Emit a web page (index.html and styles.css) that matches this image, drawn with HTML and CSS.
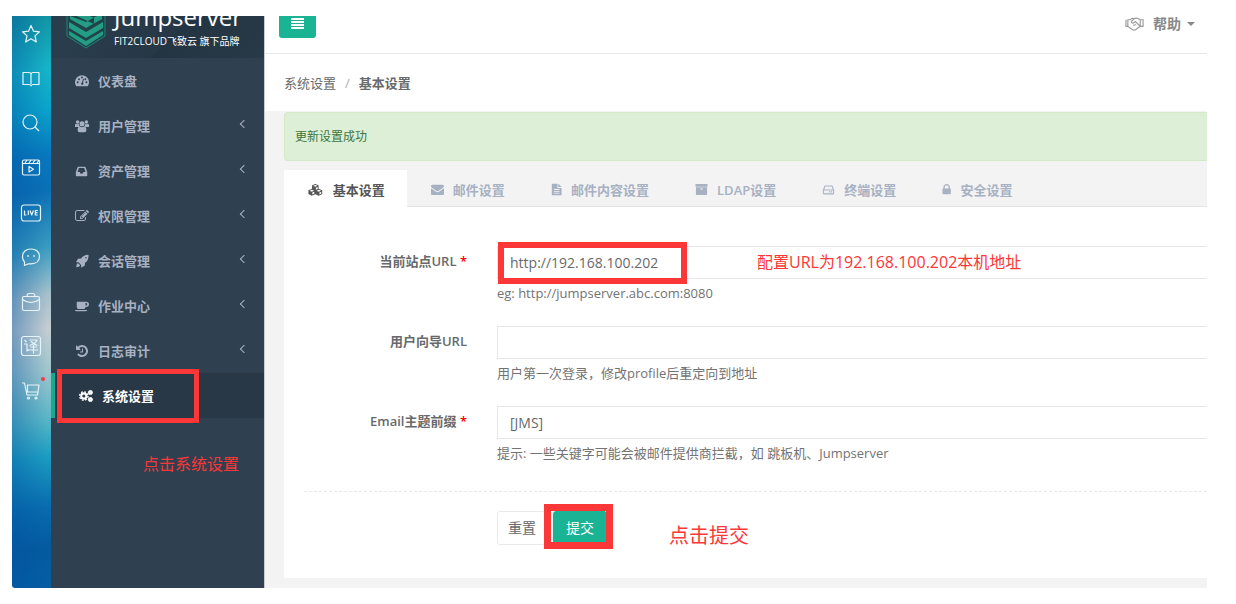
FILE: index.html
```html
<!DOCTYPE html>
<html lang="zh-CN">
<head>
<meta charset="utf-8">
<title>系统设置 - Jumpserver</title>
<link rel="stylesheet" href="styles.css">
</head>
<body>
<div class="app">
  <nav class="rail" aria-label="快捷栏">
    <a href="#" aria-label="收藏"><svg viewBox="0 0 22 22"><path d="M11 2.500l2.500 5.700 6 .6-4.500 4.100 1.300 6.100-5.300-3.200-5.300 3.200 1.300-6.100-4.500-4.100 6-.6z"/></svg></a>
    <a href="#" aria-label="阅读"><svg viewBox="0 0 22 22"><path d="M11 6v10M11 6q-.5-1.500-2-1.500H3v12h6q1.500 0 2 1.300.5-1.300 2-1.300h6v-12h-6q-1.500 0-2 1.500z"/></svg></a>
    <a href="#" aria-label="搜索"><svg viewBox="0 0 22 22"><circle cx="10" cy="10" r="7"/><path d="M15 15l4 4"/></svg></a>
    <a href="#" aria-label="视频"><svg viewBox="0 0 22 22"><rect x="2.500" y="3" width="17" height="15" rx="1.500"/><path d="M2.500 6.500h17M5 6l2-3M9 6l2-3M13 6l2-3M17 6l2-3M9 9.500v5.500l4.500-2.700z"/></svg></a>
    <a href="#" aria-label="直播"><svg viewBox="0 0 22 22"><rect x="1.500" y="3" width="19" height="16" rx="2.500"/><path d="M4.500 8.500v4.500h2M8.300 8.500v4.500M10 8.500l1.700 4.500 1.700-4.500M17.800 8.500h-2.500v4.500h2.500M15.300 10.700h2.200"/></svg></a>
    <a href="#" aria-label="消息"><svg viewBox="0 0 22 22"><path d="M4.500 19.500V16Q2.500 14 2.500 10.500C2.500 6 6 3 11 3s8.500 3 8.500 7.500S16 17.800 11 17.800H8.500z"/><path d="M8 9v2M14 9v2"/></svg></a>
    <a href="#" aria-label="工具"><svg viewBox="0 0 22 22"><rect x="2.500" y="5.500" width="17" height="14" rx="1.500"/><path d="M7 5.500q0-3 2-3h4q2 0 2 3M2.500 8.500q8.500 6 17 0M9.500 11.500h3"/></svg></a>
    <a href="#" aria-label="翻译"><svg viewBox="0 0 22 22"><rect x="1.500" y="1.500" width="19" height="19" rx="2.500"/><path d="M4.500 5l2 2M4 9h3v7l2-1.500M9.500 5h7.500q-2 4-7.500 5.500M11 6.500q3 3 6.500 4M10 12h7M9 15h9M13.500 10v8.500"/></svg></a>
    <a href="#" aria-label="购物车"><svg viewBox="0 0 22 22"><path d="M2 3h2.500l2.500 12h10.500l1.500-10H7.500v7h10"/><circle cx="8.500" cy="18" r="1"/><circle cx="16" cy="18" r="1"/></svg><i class="dot"></i></a>
  </nav>

  <aside class="sidebar">
    <div class="brand">
      <svg class="brand-logo" viewBox="0 0 40 44"><path class="shield" d="M1 1v30l19 12 19-12V1z"/><path class="shape" d="M4 4l8-3v4l16 8v6L4 8zM4 14l16 9 16-9v-6l-16 9L4 11zM3 17l17 10 17-10v6L20 33 3 23zM3 26l17 10 17-10v4L20 41 3 30z"/></svg>
      <div class="brand-text"><span class="brand-name">Jumpserver</span><span class="brand-sub">FIT2CLOUD飞致云 旗下品牌</span></div>
    </div>
    <ul class="menu">
      <li><a href="#"><svg viewBox="0 0 16 16"><path fill-rule="evenodd" d="M1.500 14A8 8 0 1 1 14.500 14zM8 12.500a1.700 1.700 0 0 0 1.200-2.800l1-4-1-.3-1 4A1.700 1.700 0 0 0 8 12.500zM2 9.500a1.100 1.100 0 1 0 2.200 0 1.100 1.100 0 0 0-2.200 0zM3.500 6a1.100 1.100 0 1 0 2.200 0 1.100 1.100 0 0 0-2.200 0zM6.900 4a1.100 1.100 0 1 0 2.200 0 1.100 1.100 0 0 0-2.200 0zM10.700 6a1.100 1.100 0 1 0 2.200 0 1.100 1.100 0 0 0-2.200 0zM12 9.500a1.100 1.100 0 1 0 2.200 0 1.100 1.100 0 0 0-2.200 0z"/></svg>仪表盘</a></li>
      <li><a href="#"><svg viewBox="0 0 16 16"><circle cx="3" cy="3.300" r="2"/><circle cx="13" cy="3.300" r="2"/><circle cx="8" cy="5.500" r="2.900"/><path d="M0 9V7q.2-1.800 1.500-1.500 1.500 1 3 .3 0 2 1 3.200zM16 9V7q-.2-1.800-1.500-1.500-1.500 1-3 .3 0 2-1 3.200zM3 13q0-4.300 2.500-4.300 2.500 1.500 5 0Q13 8.700 13 13q0 2-2 2H5q-2 0-2-2z"/></svg>用户管理<span class="arrow"></span></a></li>
      <li><a href="#"><svg viewBox="0 0 16 16"><path fill-rule="evenodd" d="M1 9l2-5.500Q3.200 3 4 3h7q.8 0 1 .5L14 9v4.500q0 .5-.5.500h-12q-.5 0-.5-.5zM3 9h2.500l1 2h2l1-2H12l-1.500-4.500h-6z"/></svg>资产管理<span class="arrow"></span></a></li>
      <li><a href="#"><svg viewBox="0 0 1792 1792"><path d="M888 1184l116-116-152-152-116 116v56h96v96h56zm440-720q-16-16-33 1l-350 350q-17 17-1 33t33-1l350-350q17-17 1-33zm80 594v190q0 119-84.500 203.500t-203.500 84.500h-832q-119 0-203.500-84.500t-84.500-203.500v-832q0-119 84.500-203.500t203.500-84.500h832q63 0 117 25 15 7 18 23 3 17-9 29l-49 49q-14 14-32 8-23-6-45-6h-832q-66 0-113 47t-47 113v832q0 66 47 113t113 47h832q66 0 113-47t47-113v-126q0-13 9-22l64-64q15-15 35-7t20 29zm-96-738l288 288-672 672h-288v-288zm444 132l-92 92-288-288 92-92q28-28 68-28t68 28l152 152q28 28 28 68t-28 68z"/></svg>权限管理<span class="arrow"></span></a></li>
      <li><a href="#"><svg viewBox="0 0 16 16"><path fill-rule="evenodd" d="M15.500 1Q10 .8 7 5L3.500 5.300 1 9.300l3 .2 3 3 .2 3.200 4-2.500L11.500 10Q15.700 7 15.500 1zM12.500 3.500a.8.8 0 1 1 0 1.600.8.8 0 0 1 0-1.600zM3.700 10.700Q1.500 11 1.500 15q4 0 4.300-2.200z"/></svg>会话管理<span class="arrow"></span></a></li>
      <li><a href="#"><svg viewBox="0 0 16 16"><path fill-rule="evenodd" d="M2 3h10.500q3.500 0 3.500 3t-3.500 3H12q0 2.500-2.500 2.500h-5Q2 11.500 2 9zM12 4.500v3h.5q1.500 0 1.500-1.500t-1.500-1.500zM0 12.500h14q0 1.500-2 1.500H2q-2 0-2-1.500z"/></svg>作业中心<span class="arrow"></span></a></li>
      <li><a href="#"><svg viewBox="0 0 1792 1792"><path d="M1664 896q0 156-61 298t-164 245-245 164-298 61q-172 0-327-72.500t-264-204.500q-7-10-6.500-22.500t8.500-20.500l137-138q10-9 25-9 16 2 23 12 73 95 179 147t225 52q104 0 198.500-40.500t163.500-109.500 109.500-163.500 40.500-198.500-40.500-198.500-109.500-163.500-163.500-109.500-198.500-40.500q-98 0-188 35.500t-160 101.500l137 138q31 30 14 69-17 40-59 40h-448q-26 0-45-19t-19-45v-448q0-42 40-59 39-17 69 14l130 129q107-101 244.500-156.500t284.500-55.500q156 0 298 61t245 164 164 245 61 298zm-640-288v448q0 14-9 23t-23 9h-320q-14 0-23-9t-9-23v-64q0-14 9-23t23-9h224v-352q0-14 9-23t23-9h64q14 0 23 9t9 23z"/></svg>日志审计<span class="arrow"></span></a></li>
      <li class="active"><a href="#"><svg viewBox="0 0 16 16"><g class="gears"><circle cx="5.500" cy="8" r="3"/><circle cx="13" cy="4" r="1.500"/><circle cx="13" cy="12" r="1.500"/></g><g class="teeth"><circle cx="5.500" cy="8" r="4.800"/></g><g class="teeth small"><circle cx="13" cy="4" r="2.500"/><circle cx="13" cy="12" r="2.500"/></g></svg>系统设置</a><span class="mark mark-menu"></span><span class="note note-menu">点击系统设置</span></li>
    </ul>
  </aside>

  <main class="main">
    <header class="topbar">
      <button class="toggle" type="button" aria-label="切换菜单"><span></span><span></span><span></span><span></span></button>
      <a class="help" href="#"><svg viewBox="0 0 20 14"><path d="M1 2.500v7h2l5 3.500q1.500.8 3 0l5-3.500h3v-7h-3L13 1q-2-.6-4 1L6.500 4.500q.5 2 2.500 1.500L11 4.500l4.500 4.500M3 9.500v-7h2L7.500 1 10 1.500M16 2.500v7M8.500 8.500q2 0 3-1.500"/></svg>帮助<span class="caret"></span></a>
    </header>
    <nav class="crumbs" aria-label="面包屑"><a href="#">系统设置</a><span class="slash">/</span><strong>基本设置</strong></nav>
    <div class="content">
      <div class="alert" role="status">更新设置成功</div>
      <div class="tabs">
        <a class="tab current" href="#"><svg viewBox="0 0 18 16"><path fill-rule="evenodd" d="M9 0l4 1.600v4.200l4.500 2v4.500L13.300 14.500 9 12.500l-4.300 2L.5 12.300V7.800L5 5.800V1.600zM9 1.200L6.300 2.300 9 3.400l2.700-1.100zM9.700 7.100l2.200-1V3.700l-2.200 1zM4.700 7L2 8.200l2.700 1.200 2.700-1.200zM13.300 7l-2.700 1.200 2.700 1.200L16 8.200zM5.300 13l2.500-1.200V9.500l-2.500 1zM14 13l2.300-1.200V9.500l-2.300 1z"/></svg>基本设置</a>
        <a class="tab" href="#"><svg viewBox="0 0 1792 1792"><path d="M1792 710v794q0 66-47 113t-113 47h-1472q-66 0-113-47t-47-113v-794q44 49 101 87 362 246 497 345 57 42 92.500 65.500t94.500 48 110 24.500h2q51 0 110-24.500t94.500-48 92.500-65.500q170-123 498-345 57-39 100-87zm0-294q0 79-49 151t-122 123q-376 261-468 325-10 7-42.500 31t-54 38.500-52 32.500-57.500 27-50 9h-2q-23 0-50-9t-57.500-27-52-32.500-54-38.500-42.500-31q-91-64-262-182.500t-205-142.500q-62-42-117-115.500t-55-136.500q0-78 41.500-130t118.500-52h1472q65 0 112.500 47t47.500 113z"/></svg>邮件设置</a>
        <a class="tab" href="#"><svg viewBox="0 0 14 16"><path fill-rule="evenodd" d="M1 1h7v5h5v9H1zM9 1l4 4H9zM3.500 7.500v1h7v-1zM3.500 9.700v1h7v-1zM3.500 12v1h7v-1z"/></svg>邮件内容设置</a>
        <a class="tab" href="#"><svg viewBox="0 0 1792 1792"><path d="M1088 832q0-26-19-45t-45-19h-256q-26 0-45 19t-19 45 19 45 45 19h256q26 0 45-19t19-45zm576-192v960q0 26-19 45t-45 19h-1408q-26 0-45-19t-19-45v-960q0-26 19-45t45-19h1408q26 0 45 19t19 45zm64-448v256q0 26-19 45t-45 19h-1536q-26 0-45-19t-19-45v-256q0-26 19-45t45-19h1536q26 0 45 19t19 45z"/></svg>LDAP设置</a>
        <a class="tab" href="#"><svg viewBox="0 0 16 16"><path fill-rule="evenodd" d="M1 9l2-5.500Q3.300 3 4.200 3h7.600q.9 0 1.200.5L15 9v3.500q0 1.500-1.500 1.500h-11Q1 14 1 12.500zM2.800 8h10.400L12 4.300H4zM2.300 9.300v3.400h11.400V9.300zM8.500 10.300H10v1.400H8.500zM11 10.300h1.500v1.400H11z"/></svg>终端设置</a>
        <a class="tab" href="#"><svg viewBox="256 0 1280 1792"><path d="M640 768h512v-192q0-106-75-181t-181-75-181 75-75 181v192zm832 96v576q0 40-28 68t-68 28h-960q-40 0-68-28t-28-68v-576q0-40 28-68t68-28h32v-192q0-184 132-316t316-132 316 132 132 316v192h32q40 0 68 28t28 68z"/></svg>安全设置</a>
      </div>
      <form class="panel">
        <div class="row">
          <label for="site">当前站点URL <b>*</b></label>
          <div class="field"><input id="site" type="text" value="http://192.168.100.202"><p>eg: http://jumpserver.abc.com:8080</p><span class="mark mark-site"></span><span class="note note-site">配置URL为192.168.100.202本机地址</span></div>
        </div>
        <div class="row">
          <label for="guide">用户向导URL</label>
          <div class="field"><input id="guide" type="text"><p>用户第一次登录，修改profile后重定向到地址</p></div>
        </div>
        <div class="row">
          <label for="prefix">Email主题前缀 <b>*</b></label>
          <div class="field"><input id="prefix" type="text" value="[JMS]"><p>提示: 一些关键字可能会被邮件提供商拦截，如 跳板机、Jumpserver</p></div>
        </div>
        <hr>
        <div class="actions">
          <button class="btn" type="reset">重置</button>
          <div class="submit"><button class="btn primary" type="submit">提交</button><span class="mark mark-submit"></span><span class="note note-submit">点击提交</span></div>
        </div>
      </form>
    </div>
  </main>
</div>
</body>
</html>
```
FILE: styles.css
```css
* { box-sizing: border-box; }
body {
  margin: 0;
  padding: 16px 29px 16px 12px;
  min-height: 100vh;
  display: flex;
  background: #fff;
  color: #676a6c;
  font: 13px/20px "Open Sans", "Noto Sans CJK SC", sans-serif;
}
a { color: inherit; text-decoration: none; }
button, input { font: inherit; color: inherit; }
.app { flex: 1; display: flex; min-width: 0; }

/* shortcut rail */
.rail {
  width: 39px;
  display: flex;
  flex-direction: column;
  align-items: center;
  justify-content: space-between;
  padding: 6px 2px 185px 0;
  border-bottom-left-radius: 3px;
  background:
    linear-gradient(90deg, rgba(0, 80, 160, .4), rgba(0, 90, 160, 0) 90%),
    linear-gradient(172deg, #12919f 0%, #16b4c8 10%, #0aa3cb 17%, #0877bd 25%, #0b70b6 31%, #3a9cc0 41%, #a5c0cc 49%, #c3cdd2 55%, #a0c6cd 62%, #55b5c6 71%, #1c9dc2 77%, #086bad 86%, #045a9f 93%, #045fa3 100%);
}
.rail a { position: relative; display: block; height: 24px; padding-top: 1px; }
.rail svg { display: block; width: 22px; height: 22px; fill: none; stroke: #e6f3f8; stroke-width: 1.2; stroke-linejoin: round; }
.dot { position: absolute; top: -2px; right: -3px; width: 4px; height: 4px; border-radius: 50%; background: #f5384a; }

/* navigation */
.sidebar { width: 213px; background: #2f4050; color: #a7b1c2; }
.brand {
  height: 42px;
  overflow: hidden;
  display: flex;
  align-items: flex-end;
  gap: 8px;
  padding: 0 15px 9px;
  background: linear-gradient(135deg, #2a3d4d 20%, #263746 55%, #233442 56%, #283947);
}
.brand-logo { width: 40px; height: 44px; flex: none; }
.shield { fill: #20434b; stroke: #1f8573; }
.shape { fill: #239d83; }
.brand-text { display: flex; flex-direction: column; color: #fff; white-space: nowrap; }
.brand-name { font-size: 24px; line-height: 32px; }
.brand-sub { font-size: 10px; line-height: 16px; }
.menu { list-style: none; margin: 0; padding: 0; }
.menu li { position: relative; }
.menu a { display: flex; align-items: center; gap: 9px; height: 45px; padding: 0 17px 0 24px; font-weight: 600; }
.menu svg { width: 14px; height: 14px; fill: currentColor; }
.arrow { width: 6px; height: 6px; margin-left: auto; margin-bottom: 4px; border: solid currentColor; border-width: 0 0 1px 1px; transform: rotate(45deg); }
.menu .active { background: #293846; color: #fff; border-left: 4px solid #19aa8d; }
.gears, .teeth { fill: none; stroke: currentColor; stroke-width: 2.4; }
.teeth { stroke-width: 1.6; stroke-dasharray: 2 1.77; }
.small { stroke-width: 1; stroke-dasharray: 1 .96; }

/* page */
.main { flex: 1; min-width: 0; border-left: 1px solid #c9cdd1; background: #f3f3f4; }
.topbar { height: 38px; display: flex; justify-content: space-between; padding: 0 12px 0 14px; background: #fff; border-bottom: 1px solid #e7eaec; }
.toggle { width: 37px; height: 22px; padding: 2px 0 0 12px; border: 0; border-radius: 0 0 3px 3px; background: #1ab394; display: flex; flex-direction: column; gap: 1px; }
.toggle span { width: 13px; height: 2px; background: #fff; }
.help { display: flex; align-items: center; height: 16px; font-size: 14px; font-weight: 600; color: #888; gap: 9px; }
.help svg { width: 19px; height: 14px; fill: none; stroke: #999; stroke-width: 1.2; }
.caret { margin-left: -3px; border: 4px solid transparent; border-top-color: currentColor; border-bottom: 0; }
.crumbs { display: flex; align-items: center; gap: 9px; height: 57px; padding-left: 19px; background: #fff; }
.crumbs strong { font-weight: 600; }
.slash { color: #aaa; }
.content { padding: 1px 0 10px 19px; }
.alert { padding: 14px 10px 13px; border: 1px solid #d6e9c6; border-right: 0; border-radius: 4px 0 0 4px; background: #ddefd7; color: #3c763d; font-size: 12px; margin-bottom: 9px; }
.tabs { display: flex; height: 37px; border-bottom: 1px solid #e2e4e6; }
.tab { display: flex; align-items: center; gap: 9px; height: 36px; padding: 3px 22px 0 24px; color: #a7b1c2; font-weight: 600; white-space: nowrap; }
.tab svg { height: 13px; fill: currentColor; }
.current { height: 37px; background: #fff; color: #555; gap: 10px; }
.panel { padding: 39px 0 33px 20px; background: #fff; }
.row { display: flex; gap: 30px; min-height: 80px; }
.row label { width: 163px; padding-top: 5px; text-align: right; font-weight: 600; }
.row b { color: red; font-weight: 600; }
.field { position: relative; flex: 1; min-width: 0; }
.field input { display: block; width: 100%; height: 33px; padding: 0 12px; border: 1px solid #e5e6e7; border-right: 0; border-radius: 1px 0 0 1px; background: #fff; font-size: 14px; outline: 0; }
.field p { margin: 4px 0 0; color: #737373; }
hr { margin: 5px 0 19px; border: 0; border-top: 1px dashed #e7eaec; }
.actions { display: flex; gap: 6px; padding-left: 193px; }
.btn { height: 34px; width: 50px; padding: 0; border: 1px solid #e7eaec; border-radius: 3px; background: #fff; font-size: 14px; }
.primary { width: 54px; border-color: #1ab394; background: #1ab394; color: #fff; }
.submit { position: relative; }

/* callouts lying over the page */
.mark { position: absolute; border: 5px solid #fc3737; pointer-events: none; }
.mark-menu { top: -4px; left: 2px; width: 142px; height: 54px; }
.mark-site { top: -4px; left: 1px; width: 189px; height: 42px; border-width: 6px; }
.mark-submit { top: -7px; left: -9px; width: 69px; height: 45px; border-width: 7px; }
.note { position: absolute; white-space: nowrap; color: #fc3737; font-size: 16px; line-height: 24px; }
.note-menu { top: 79px; left: 88px; }
.note-site { top: 4px; left: 260px; }
.note-submit { top: 13px; left: 116px; font-size: 20px; }
```
